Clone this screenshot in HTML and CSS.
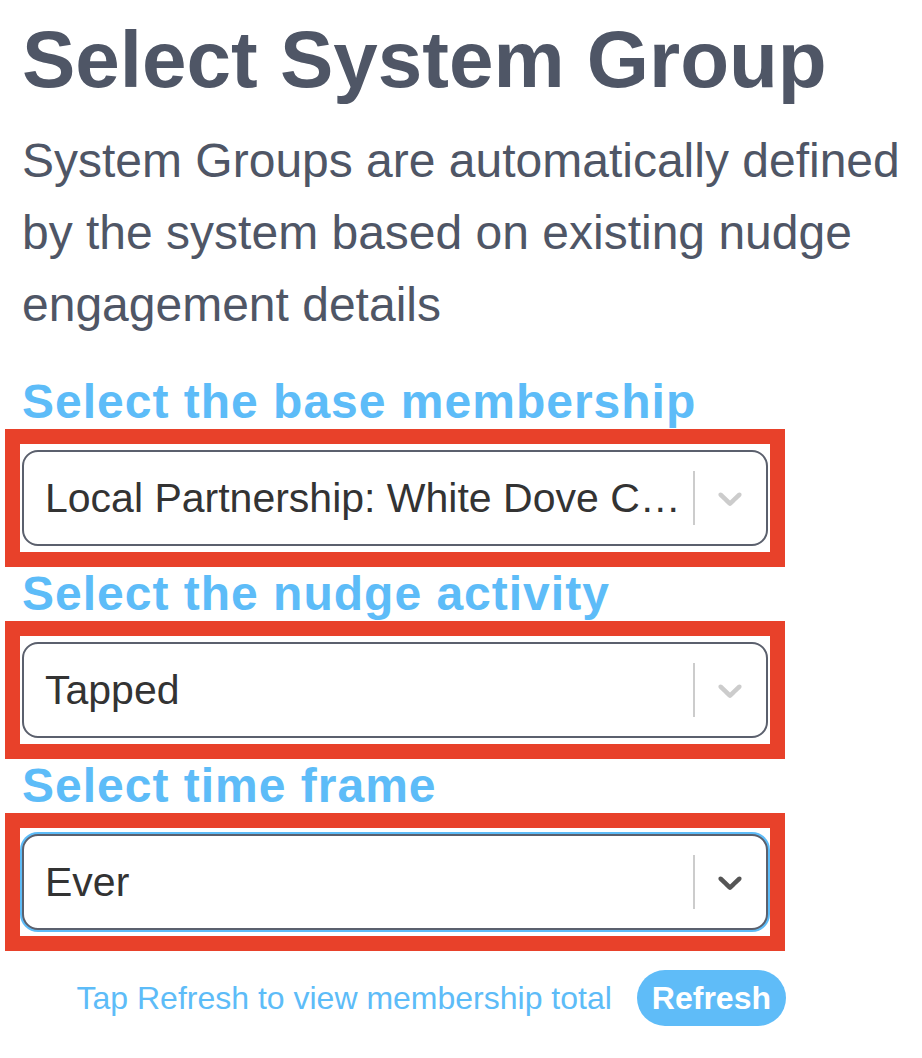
FILE: index.html
```html
<!DOCTYPE html>
<html>

<head>
    <meta charset="UTF-8">
    <meta name="viewport" content="width=device-width, initial-scale=1.0">
    <title>Select System Group</title>
    <link rel="stylesheet" href="styles.css">
</head>

<body>
    <h1 class="title">Select System Group</h1>
    <p class="intro">System Groups are automatically defined by the system based on existing nudge engagement details</p>

    <div class="form">
        <label class="field-label">Select the base membership</label>
        <div class="frame">
            <div class="select">
                <div class="select-value">Local Partnership: White Dove Community Center</div>
                <span class="select-divider"></span>
                <span class="select-arrow">
                    <svg viewBox="0 0 20 20" width="40" height="40"><path d="M4.516 7.548c0.436-0.446 1.043-0.481 1.576 0l3.908 3.747 3.908-3.747c0.533-0.481 1.141-0.446 1.574 0 0.436 0.445 0.408 1.197 0 1.615-0.406 0.418-4.695 4.502-4.695 4.502-0.217 0.223-0.502 0.335-0.787 0.335s-0.57-0.112-0.789-0.335c0 0-4.287-4.084-4.695-4.502s-0.436-1.170 0-1.615z"/></svg>
                </span>
            </div>
        </div>

        <label class="field-label">Select the nudge activity</label>
        <div class="frame">
            <div class="select">
                <div class="select-value">Tapped</div>
                <span class="select-divider"></span>
                <span class="select-arrow">
                    <svg viewBox="0 0 20 20" width="40" height="40"><path d="M4.516 7.548c0.436-0.446 1.043-0.481 1.576 0l3.908 3.747 3.908-3.747c0.533-0.481 1.141-0.446 1.574 0 0.436 0.445 0.408 1.197 0 1.615-0.406 0.418-4.695 4.502-4.695 4.502-0.217 0.223-0.502 0.335-0.787 0.335s-0.57-0.112-0.789-0.335c0 0-4.287-4.084-4.695-4.502s-0.436-1.170 0-1.615z"/></svg>
                </span>
            </div>
        </div>

        <label class="field-label">Select time frame</label>
        <div class="frame">
            <div class="select is-focused">
                <div class="select-value">Ever</div>
                <span class="select-divider"></span>
                <span class="select-arrow">
                    <svg viewBox="0 0 20 20" width="40" height="40"><path d="M4.516 7.548c0.436-0.446 1.043-0.481 1.576 0l3.908 3.747 3.908-3.747c0.533-0.481 1.141-0.446 1.574 0 0.436 0.445 0.408 1.197 0 1.615-0.406 0.418-4.695 4.502-4.695 4.502-0.217 0.223-0.502 0.335-0.787 0.335s-0.57-0.112-0.789-0.335c0 0-4.287-4.084-4.695-4.502s-0.436-1.170 0-1.615z"/></svg>
                </span>
            </div>
        </div>

        <div class="refresh-row">
            <span class="hint">Tap Refresh to view membership total</span>
            <button class="refresh-btn">Refresh</button>
        </div>
    </div>
</body>

</html>
```

FILE: styles.css
```css
body {
    font-family: 'Liberation Sans', Arial, sans-serif;
    background-color: #fff;
    color: #4f5666;
    margin: 0;
    padding: 20px 0 0 22px;
}

.title {
    font-size: 80px;
    line-height: 80px;
    font-weight: bold;
    margin: 0;
}

.intro {
    font-size: 48px;
    line-height: 72px;
    margin: 25px 0 34px;
}

.form {
    width: 748px;
}

.field-label {
    display: block;
    font-size: 48px;
    line-height: 54px;
    font-weight: bold;
    letter-spacing: 1px;
    color: #5dbcf8;
    white-space: nowrap;
}

/* red highlight round each dropdown */
.frame {
    border: 15px solid #e8412a;
    padding: 6px 2px;
    margin: 0 -15px 0 -17px;
}

.select {
    display: flex;
    align-items: center;
    height: 96px;
    box-sizing: border-box;
    border: 2px solid #5b606d;
    border-radius: 16px;
    background-color: #fff;
}

.select.is-focused {
    box-shadow: 0 0 0 2px #5dbcf8;
}

.select-value {
    flex: 1;
    min-width: 0;
    padding-left: 21px;
    font-size: 41px;
    color: #333;
    white-space: nowrap;
    overflow: hidden;
    text-overflow: ellipsis;
}

.select-divider {
    align-self: stretch;
    width: 2px;
    margin: 19px 0;
    background-color: #ccc;
}

.select-arrow {
    display: flex;
    padding: 0 16px 0 15px;
    fill: #ccc;
}

.is-focused .select-arrow {
    fill: #555;
}

.refresh-row {
    display: flex;
    align-items: center;
    justify-content: flex-end;
    gap: 25px;
    width: 764px;
    margin-top: 19px;
}

.hint {
    font-size: 32px;
    color: #5dbcf8;
}

.refresh-btn {
    height: 56px;
    padding: 0 15px;
    border: none;
    border-radius: 28px;
    background-color: #5fbcf8;
    color: #fff;
    font-family: inherit;
    font-size: 32px;
    font-weight: bold;
    cursor: pointer;
}
```
